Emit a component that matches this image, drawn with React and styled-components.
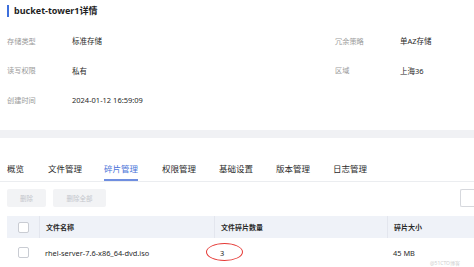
import React from 'react';
import styled, { createGlobalStyle } from 'styled-components';

const GlobalStyle = createGlobalStyle`
  body {
    margin: 0;
    background: #fff;
    overflow: hidden;
    font-family: "Noto Sans", "Noto Sans CJK SC", sans-serif;
  }
`

const Page = styled.div`
  width: 474px;
  height: 267px;
  overflow: hidden;
  background: #fff;
`

const InfoCard = styled.div`
  height: 130px;
  padding: 5px 0 0 7px;
  box-sizing: border-box;
`

const Title = styled.h3`
  margin: 0;
  height: 12px;
  line-height: 12px;
  border-left: 2px solid #3d6fdc;
  padding-left: 5px;
  font-size: 9px;
  font-weight: 700;
  color: #1f1f1f;
`

const InfoGrid = styled.div`
  margin-top: 9px;
  display: grid;
  grid-template-columns: 65px 263px 65px 1fr;
  grid-auto-rows: 29.5px;
  align-items: center;
  font-size: 7.5px;
`

const Label = styled.span`
  color: #9a9a9a;
  font-size: 7.2px;
`

const Value = styled.span`
  color: #2a2a2a;
`

const Divider = styled.div`
  height: 8px;
  background: #f0f1f4;
`

const Tabs = styled.div`
  display: flex;
  margin-top: 25px;
  padding-left: 7px;
  border-bottom: 1px solid #ebedf0;
  height: 19px;
  box-sizing: border-box;
`

const Tab = styled.div`
  font-size: 8.5px;
  line-height: 12px;
  margin-right: ${p => p.$gap}px;
  color: ${p => (p.$active ? '#4b73d8' : '#2a2a2a')};
  border-bottom: 2px solid ${p => (p.$active ? '#6f8ee0' : 'transparent')};
  height: 18px;
  box-sizing: border-box;
`

const Toolbar = styled.div`
  display: flex;
  gap: 7px;
  padding: 7px 0 0 7px;
`

const GhostButton = styled.button`
  height: 18px;
  width: ${p => p.$w}px;
  border: none;
  border-radius: 2px;
  background: #f2f3f5;
  color: #c3c6cc;
  font-size: 6.5px;
  font-family: inherit;
  padding: 0;
`

const EdgeButton = styled.div`
  margin-left: auto;
  width: 14px;
  height: 18px;
  border: 1px solid #d6d8dd;
  border-right: none;
  border-radius: 2px 0 0 2px;
  box-sizing: border-box;
`

const Table = styled.div`
  margin: 9px 0 0 7px;
`

const Row = styled.div`
  display: grid;
  grid-template-columns: 32px 175px 173px 1fr;
  height: ${p => (p.$head ? 22 : 29)}px;
  background: ${p => (p.$head ? '#eff2f8' : '#fff')};
  align-items: center;
  font-size: ${p => (p.$head ? 7 : 7.4)}px;
  font-weight: ${p => (p.$head ? 700 : 400)};
  color: #2a2a2a;
`

const Cell = styled.div`
  height: 100%;
  display: flex;
  align-items: center;
  padding-left: 6px;
  border-left: ${p => (p.$line ? '1px solid #e3e6ee' : 'none')};
  position: relative;
  box-sizing: border-box;
  white-space: nowrap;
`

const CheckCell = styled.div`
  display: flex;
  align-items: center;
  justify-content: center;
  height: 100%;
`

const Check = styled.span`
  width: 9px;
  height: 9px;
  border: 1px solid #c9ccd3;
  border-radius: 2px;
  background: #fff;
`

const Circle = styled.span`
  position: absolute;
  left: -8px;
  top: 5px;
  width: 37px;
  height: 18px;
  border: 1.2px solid #e53935;
  border-radius: 50%;
  box-sizing: border-box;
`

const Watermark = styled.span`
  position: absolute;
  right: 14px;
  bottom: 1px;
  font-size: 5px;
  color: #cfcfcf;
  font-weight: 400;
`

const tabs = [
  ['概览', 24],
  ['文件管理', 22],
  ['碎片管理', 24],
  ['权限管理', 23],
  ['基础设置', 23],
  ['版本管理', 23],
  ['日志管理', 0],
]

const App = () => {
  return (
    <Page>
      <GlobalStyle />
      <InfoCard>
        <Title>bucket-tower1详情</Title>
        <InfoGrid>
          <Label>存储类型</Label>
          <Value>标准存储</Value>
          <Label>冗余策略</Label>
          <Value>单AZ存储</Value>
          <Label>读写权限</Label>
          <Value>私有</Value>
          <Label>区域</Label>
          <Value>上海36</Value>
          <Label>创建时间</Label>
          <Value>2024-01-12 16:59:09</Value>
        </InfoGrid>
      </InfoCard>
      <Divider />
      <Tabs>
        {tabs.map(([name, gap]) => (
          <Tab key={name} $gap={gap} $active={name === '碎片管理'}>{name}</Tab>
        ))}
      </Tabs>
      <Toolbar>
        <GhostButton $w={39}>删除</GhostButton>
        <GhostButton $w={53}>删除全部</GhostButton>
        <EdgeButton />
      </Toolbar>
      <Table>
        <Row $head>
          <CheckCell><Check /></CheckCell>
          <Cell $line>文件名称</Cell>
          <Cell $line>文件碎片数量</Cell>
          <Cell $line>碎片大小</Cell>
        </Row>
        <Row>
          <CheckCell><Check /></CheckCell>
          <Cell>rhel-server-7.6-x86_64-dvd.iso</Cell>
          <Cell>3<Circle /></Cell>
          <Cell>45 MB<Watermark>@51CTO博客</Watermark></Cell>
        </Row>
      </Table>
    </Page>
  );
}

export default App;
